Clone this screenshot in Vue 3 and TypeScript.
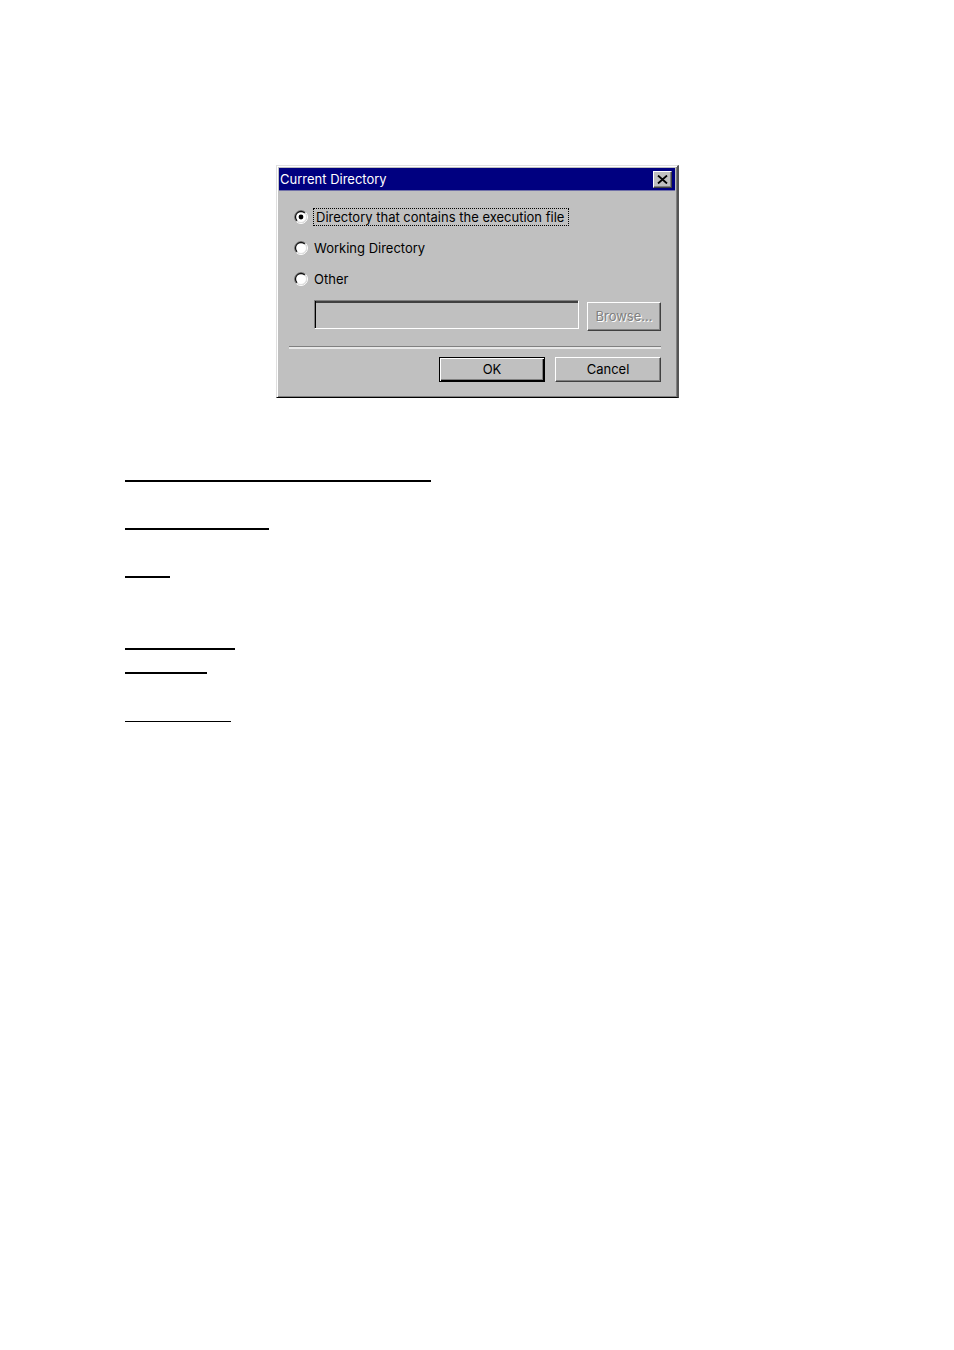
<script setup lang="ts">
import { ref } from 'vue'

interface Choice {
  value: string
  label: string
}

const choices: Choice[] = [
  { value: 'execution', label: 'Directory that contains the execution file' },
  { value: 'working', label: 'Working Directory' },
  { value: 'other', label: 'Other' },
]
const selected = ref<string>('execution')
const path = ref<string>('')

// Each rule takes one 24px line; skip is the number of empty lines after it.
const rules = [
  { width: 306, skip: 1, thin: false },
  { width: 144, skip: 1, thin: false },
  { width: 45, skip: 2, thin: false },
  { width: 110, skip: 0, thin: false },
  { width: 82, skip: 1, thin: false },
  { width: 106, skip: 0, thin: true },
]
</script>

<template>
  <main class="page">
    <form class="dialog" role="dialog" aria-labelledby="dialog-title" @submit.prevent>
      <header class="titlebar">
        <span id="dialog-title">Current Directory</span>
        <button type="button" class="close" aria-label="Close">
          <svg width="11" height="9" viewBox="0 0 11 9" aria-hidden="true">
            <path d="M1 0.5 L10 8.5 M10 0.5 L1 8.5" fill="none" stroke="#000" stroke-width="1.8" />
          </svg>
        </button>
      </header>

      <div class="body">
        <div class="choices" role="radiogroup" aria-labelledby="dialog-title">
          <label v-for="c in choices" :key="c.value" class="choice">
            <input v-model="selected" type="radio" name="directory" :value="c.value" />
            <svg class="dial" width="14" height="14" viewBox="0 0 14 14" aria-hidden="true">
              <circle cx="7" cy="7" r="5.5" fill="#fff" />
              <path d="M2.4 11.6 A6.5 6.5 0 0 1 11.6 2.4" fill="none" stroke="#808080" />
              <path d="M3.1 10.9 A5.5 5.5 0 0 1 10.9 3.1" fill="none" stroke="#111" stroke-width="1.3" />
              <path d="M11.6 2.4 A6.5 6.5 0 0 1 2.4 11.6" fill="none" stroke="#fff" />
              <path d="M10.9 3.1 A5.5 5.5 0 0 1 3.1 10.9" fill="none" stroke="#dfdfdf" />
              <circle v-if="selected === c.value" cx="7" cy="7" r="2.4" fill="#000" />
            </svg>
            <span :class="{ focused: selected === c.value }">{{ c.label }}</span>
          </label>
        </div>

        <div class="field">
          <input v-model="path" type="text" aria-label="Other directory" disabled />
          <button type="button" class="browse" disabled>Browse...</button>
        </div>

        <hr />

        <div class="actions">
          <button type="submit" class="default">OK</button>
          <button type="button">Cancel</button>
        </div>
      </div>
    </form>

    <div class="rules" aria-hidden="true">
      <div
        v-for="(r, i) in rules"
        :key="i"
        class="rule"
        :class="{ thin: r.thin }"
        :style="{ width: r.width + 'px', marginBottom: r.skip * 24 + 'px' }"
      ></div>
    </div>
  </main>
</template>

<style>
body {
  background: #fff;
}
</style>

<style scoped>
.page {
  box-sizing: border-box;
  padding: 165px 124px 0 125px;
  font-family: Inter, "Liberation Sans", sans-serif;
  font-size: 13px;
  line-height: 16px;
  color: #000;
}
.dialog {
  box-sizing: border-box;
  max-width: 403px;
  margin: 0 auto;
  background: #c0c0c0;
  border-style: solid;
  border-width: 1px 2px 1px 1px;
  border-color: #dfdfdf #555 #000 #dfdfdf;
  box-shadow: inset 1px 0 #fff, inset 0 1px #fff, inset -1px -1px #808080;
  padding: 2px 1px 1px;
}
.titlebar {
  display: flex;
  align-items: center;
  justify-content: space-between;
  box-sizing: border-box;
  height: 23px;
  margin: 0 1px;
  padding: 0 3px 0 1px;
  background: #000080;
  border-bottom: 1px solid #7070a8;
  color: #fff;
}
button {
  box-sizing: border-box;
  height: 25px;
  padding: 0 0 1px;
  border: 1px solid;
  border-color: #fff #404040 #404040 #fff;
  border-radius: 0;
  background: #c0c0c0;
  box-shadow: inset -1px -1px #808080;
  color: #000;
  font: inherit;
}
.close {
  display: flex;
  align-items: center;
  justify-content: center;
  width: 19px;
  height: 17px;
  padding: 0;
}
.body {
  padding: 16px 15px 14px 11px;
}
.choices {
  display: grid;
  gap: 12px;
  padding-left: 5px;
}
.choice {
  display: flex;
  align-items: center;
  gap: 6px;
  height: 19px;
  position: relative;
}
.choice input {
  position: absolute;
  width: 14px;
  height: 14px;
  margin: 0;
  opacity: 0;
}
.choice .focused {
  padding: 0 4px 0 2px;
  outline: 1px dotted #000;
}
.field {
  display: flex;
  align-items: flex-end;
  gap: 8px;
  margin: 12px 0 0 25px;
}
.field input {
  box-sizing: border-box;
  flex: 1;
  min-width: 0;
  height: 29px;
  margin-bottom: 2px;
  padding: 0 4px;
  border: 1px solid;
  border-color: #808080 #fff #fff #808080;
  border-radius: 0;
  background: #c0c0c0;
  box-shadow: inset 1px 0 #000, inset 0 2px #404040;
  font: inherit;
}
.browse {
  width: 74px;
  height: 29px;
  color: #808080;
  text-shadow: 1px 1px #fff;
}
hr {
  height: 1px;
  margin: 15px 0 9px;
  border: 0;
  background: #808080;
  box-shadow: 0 1px #e8e8e8, 0 2px #e8e8e8;
}
.actions {
  display: flex;
  justify-content: flex-end;
  gap: 10px;
  padding-top: 1px;
}
.actions button {
  width: 106px;
}
.actions .default {
  border-color: #000;
  box-shadow: inset 1px 1px #fff, inset -1px -1px #000, inset -2px -2px #808080;
}
.rules {
  display: flex;
  flex-direction: column;
  padding-top: 82px;
}
.rule {
  box-sizing: border-box;
  height: 24px;
  border-top: 2px solid #000;
}
.rule.thin {
  height: 23px;
  margin-top: 1px;
  border-top-width: 1px;
}
</style>
